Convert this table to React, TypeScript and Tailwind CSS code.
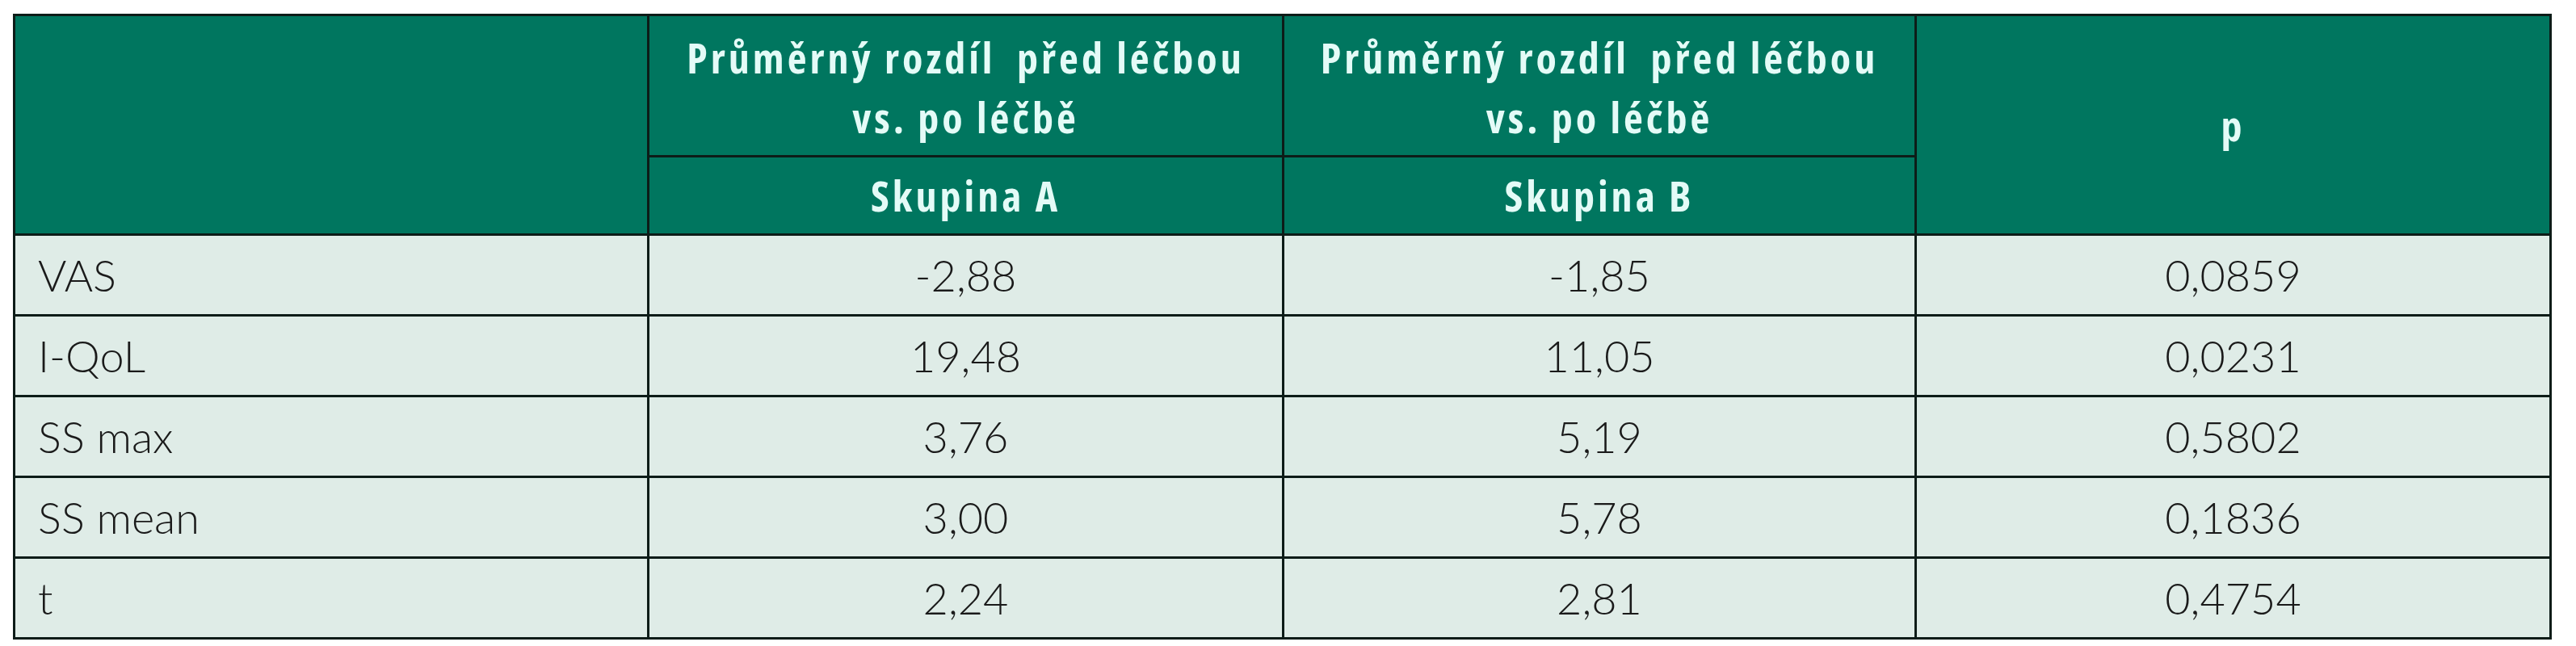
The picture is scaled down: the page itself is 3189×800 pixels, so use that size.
const rows = [
  { label: "VAS", a: "-2,88", b: "-1,85", p: "0,0859" },
  { label: "I-QoL", a: "19,48", b: "11,05", p: "0,0231" },
  { label: "SS max", a: "3,76", b: "5,19", p: "0,5802" },
  { label: "SS mean", a: "3,00", b: "5,78", p: "0,1836" },
  { label: "t", a: "2,24", b: "2,81", p: "0,4754" },
];

const head =
  "border-[3px] border-[#0d1c18] bg-[#00765f] text-[#e4fbf7] font-bold text-center align-middle [font-family:'Open_Sans','Liberation_Sans',sans-serif] [font-stretch:87.5%] text-[52px] tracking-[4px]";
const cell =
  "border-[3px] border-[#0d1c18] bg-[#dfece7] text-[#1a1a1a] h-[100px] align-middle [font-family:Lato,'Liberation_Sans',sans-serif] font-light text-[54px] leading-none";

export default function App() {
  return (
    <div className="min-h-[800px] bg-white pl-[16px] pt-[17px]">
      <table className="w-[3140px] table-fixed border-collapse">
        <colgroup>
          <col className="w-[785px]" />
          <col className="w-[786px]" />
          <col className="w-[783px]" />
          <col className="w-[786px]" />
        </colgroup>
        <thead>
          <tr>
            <th rowSpan={2} className={head}></th>
            <th className={`${head} h-[175px] pt-[4px] leading-[74px]`}>
              Průměrný rozdíl&nbsp; před léčbou
              <br />
              vs. po léčbě
            </th>
            <th className={`${head} h-[175px] pt-[4px] leading-[74px]`}>
              Průměrný rozdíl&nbsp; před léčbou
              <br />
              vs. po léčbě
            </th>
            <th rowSpan={2} className={head}>
              p
            </th>
          </tr>
          <tr>
            <th className={`${head} h-[97px] leading-none`}>Skupina A</th>
            <th className={`${head} h-[97px] leading-none`}>Skupina B</th>
          </tr>
        </thead>
        <tbody>
          {rows.map((r) => (
            <tr key={r.label}>
              <td className={`${cell} pl-[28px] text-left`}>{r.label}</td>
              <td className={`${cell} text-center`}>{r.a}</td>
              <td className={`${cell} text-center`}>{r.b}</td>
              <td className={`${cell} text-center`}>{r.p}</td>
            </tr>
          ))}
        </tbody>
      </table>
    </div>
  );
}
